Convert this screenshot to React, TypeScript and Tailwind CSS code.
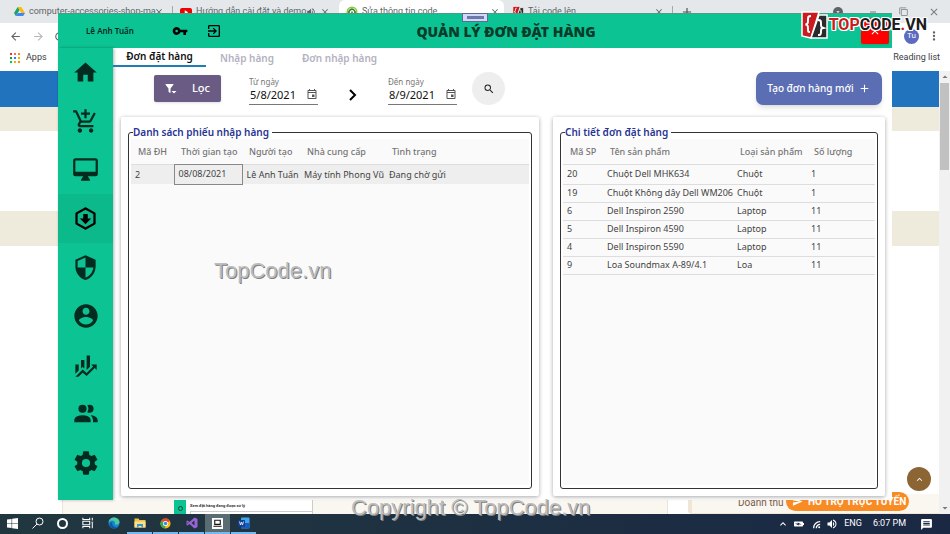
import type { ReactNode } from "react";
import {
  MdAdd, MdAddShoppingCart, MdArrowBack, MdArrowForward, MdClose, MdExitToApp, MdHome, MdMoreVert,
  MdRefresh, MdSearch, MdSecurity, MdVpnKey, MdVolumeUp, MdOutlineEvent, MdKeyboardArrowUp,
  MdArrowDropUp, MdArrowDropDown, MdMinimize, MdFilterNone, MdRssFeed, MdBatteryChargingFull,
  MdMessage, MdSend,
} from "react-icons/md";

const Glyph = ({ d, className = "size-[27px]" }: { d: string; className?: string }) => (
  <svg viewBox="0 0 24 24" className={className} fill="currentColor"><path d={d} /></svg>
);

const hexArrow = "M21,16.5C21,16.88 20.79,17.21 20.47,17.38L12.57,21.82C12.41,21.94 12.21,22 12,22C11.79,22 11.59,21.94 11.43,21.82L3.53,17.38C3.21,17.21 3,16.88 3,16.5V7.5C3,7.12 3.21,6.79 3.53,6.62L11.43,2.18C11.59,2.06 11.79,2 12,2C12.21,2 12.41,2.06 12.57,2.18L20.47,6.62C20.79,6.79 21,7.12 21,7.5V16.5M12,4.15L5,8.09V15.91L12,19.85L19,15.91V8.09L12,4.15ZM10,8V12H7L12,17L17,12H14V8Z";
const finance = "M6,16.5L3,19.44V11H6M11,14.66L9.43,13.32L8,14.64V7H11M16,13L13,16V3H16M18.81,12.81L17,11H22V16L20.21,14.21L13,21.36L9.53,18.34L5.75,22H3L9.47,15.66L13,18.64";
const filterMenu = "M11 11L16.76 3.62A1 1 0 0 0 16.59 2.22A1 1 0 0 0 16 2H2A1 1 0 0 0 1.38 2.22A1 1 0 0 0 1.21 3.62L7 11V16.87A1 1 0 0 0 7.29 17.7L9.29 19.7A1 1 0 0 0 10.7 19.7A1 1 0 0 0 11 18.87V11M13 16L18 21L23 16Z";
const desktop = "M21,14H3V4H21M21,2H3C1.89,2 1,2.89 1,4V16A2,2 0 0,0 3,18H10L8,21V22H16V21L14,18H21A2,2 0 0,0 23,16V4C23,2.89 22.1,2 21,2Z";
const account = "M12 2C6.48 2 2 6.48 2 12s4.48 10 10 10 10-4.48 10-10S17.52 2 12 2zm0 3c1.66 0 3 1.34 3 3s-1.34 3-3 3-3-1.34-3-3 1.34-3 3-3zm0 14.2c-2.5 0-4.71-1.28-6-3.22.03-1.99 4-3.08 6-3.08 1.99 0 5.97 1.09 6 3.08-1.29 1.94-3.5 3.22-6 3.22z";
const people = "M16 17V19H2V17S2 13 9 13 16 17 16 17M12.5 7.5A3.5 3.5 0 1 0 9 11A3.5 3.5 0 0 0 12.5 7.5M15.94 13A5.32 5.32 0 0 1 18 17V19H22V17S22 13.37 15.94 13M15 4A3.39 3.39 0 0 0 13.07 4.59A5 5 0 0 1 13.07 10.41A3.39 3.39 0 0 0 15 11A3.5 3.5 0 0 0 15 4Z";
const cog = "M12,15.5A3.5,3.5 0 0,1 8.5,12A3.5,3.5 0 0,1 12,8.5A3.5,3.5 0 0,1 15.5,12A3.5,3.5 0 0,1 12,15.5M19.43,12.97C19.47,12.65 19.5,12.33 19.5,12C19.5,11.67 19.47,11.34 19.43,11L21.54,9.37C21.73,9.22 21.78,8.95 21.66,8.73L19.66,5.27C19.54,5.05 19.27,4.96 19.05,5.05L16.56,6.05C16.04,5.66 15.5,5.32 14.87,5.07L14.5,2.42C14.46,2.18 14.25,2 14,2H10C9.75,2 9.54,2.18 9.5,2.42L9.13,5.07C8.5,5.32 7.96,5.66 7.44,6.05L4.95,5.05C4.73,4.96 4.46,5.05 4.34,5.27L2.34,8.73C2.21,8.95 2.27,9.22 2.46,9.37L4.57,11C4.53,11.34 4.5,11.67 4.5,12C4.5,12.33 4.53,12.65 4.57,12.97L2.46,14.63C2.27,14.78 2.21,15.05 2.34,15.27L4.34,18.73C4.46,18.95 4.73,19.03 4.95,18.95L7.44,17.94C7.96,18.34 8.5,18.68 9.13,18.93L9.5,21.58C9.54,21.82 9.75,22 10,22H14C14.25,22 14.46,21.82 14.5,21.58L14.87,18.93C15.5,18.67 16.04,18.34 16.56,17.94L19.05,18.95C19.27,19.03 19.54,18.95 19.66,18.73L21.66,15.27C21.78,15.05 21.73,14.78 21.54,14.63L19.43,12.97Z";

const Drive = () => (
  <svg viewBox="0 0 24 24" className="size-[11px] shrink-0">
    <path d="M8 2h8l8 13h-8z" fill="#fbbc04" />
    <path d="M8 2l4 7L4 22l-4-7z" fill="#1ea362" />
    <path d="M8 15h16l-4 7H4z" fill="#4285f4" />
  </svg>
);

const YouTube = () => (
  <svg viewBox="0 0 24 24" className="size-3 shrink-0">
    <rect y="4" width="24" height="17" rx="4" fill="#f00000" />
    <path d="M9.500 8.500v8l7-4z" fill="#fff" />
  </svg>
);

const Swirl = () => (
  <svg viewBox="0 0 24 24" className="size-3 shrink-0" fill="none" strokeWidth="3">
    <circle cx="12" cy="12" r="9.500" stroke="#8dc63f" />
    <path d="M7 16a6 6 0 1 1 9 1M12 11v8" stroke="#3c7d22" />
  </svg>
);

const BraceLogo = ({ className }: { className: string }) => (
  <svg viewBox="0 0 28 28" className={className}>
    <path d="M2 1h17L11 27l-9-2z" fill="#c91b20" stroke="#fff" strokeWidth="1.500" />
    <path d="M19 4h8v23H11z" fill="#2b2b2b" stroke="#fff" strokeWidth="1.500" />
    <path d="M11 5c-3 0-3 1-3 4s0 4-2.500 4.500C8 14 8 15 8 18s0 3 2 3M18 9c3 0 3 1 3 4s0 3 2.500 4C21 17.500 21 18 21 21s-1 3-3 3" fill="none" stroke="#fff" strokeWidth="2" />
  </svg>
);

type TabProps = { icon: ReactNode; title: string; sound?: boolean; className: string };
const BrowserTab = ({ icon, title, sound, className }: TabProps) => (
  <div className={`flex h-full items-center gap-1 pr-1 text-[9px] text-[#5f6368] ${className}`}>
    {icon}
    <span className="min-w-0 flex-1 whitespace-nowrap">{title}</span>
    {sound && <MdVolumeUp className="size-[10px] shrink-0" />}
    <button aria-label="Close tab" className="shrink-0"><MdClose className="size-[10px]" /></button>
  </div>
);

const appDots = ["bg-red-500", "bg-red-400", "bg-orange-400", "bg-green-600", "bg-blue-500", "bg-yellow-500", "bg-green-500", "bg-yellow-500", "bg-orange-400"];

const Browser = () => (
  <div className="flex min-h-0 flex-1 flex-col bg-white font-['Roboto',sans-serif]">
    <div className="flex h-[23px] items-center bg-[#e4e8eb]">
      <BrowserTab icon={<Drive />} title="computer-accessories-shop-ma" className="ml-[14px] w-[154px]" />
      <i className="mx-1 h-3 w-px bg-[#a5a9ad]" />
      <BrowserTab icon={<YouTube />} title="Hướng dẫn cài đặt và demo" sound className="ml-[3px] w-[154px]" />
      <BrowserTab icon={<Swirl />} title="Sửa thông tin code" className="ml-[5px] w-[165px] rounded-t-md bg-white pl-[7px]" />
      <BrowserTab icon={<BraceLogo className="size-3 shrink-0" />} title="Tải code lên" className="ml-[8px] w-[156px]" />
      <i className="mx-1 h-3 w-px bg-[#a5a9ad]" />
      <button aria-label="New tab" className="ml-[3px]"><MdAdd className="size-[14px] text-[#4b4f54]" /></button>
      <div className="ml-auto flex items-center text-[#777b80]">
        <span className="mr-[24px] flex size-[10px] items-center justify-center rounded-full bg-[#5f6368] text-white"><MdArrowDropDown className="size-2" /></span>
        <button aria-label="Minimize" className="mr-5 -mt-2"><MdMinimize className="size-3" /></button>
        <button aria-label="Restore" className="mr-5"><MdFilterNone className="size-[9px] -scale-x-100 rotate-180" /></button>
        <button aria-label="Close" className="mr-[10px]"><MdClose className="size-3" /></button>
      </div>
    </div>
    <div className="flex h-[25px] items-center px-[9px] pt-px text-[#5f6368]">
      <button aria-label="Back"><MdArrowBack className="size-[13px]" /></button>
      <button aria-label="Forward" className="ml-[10px] text-[#b5b8bc]"><MdArrowForward className="size-[13px]" /></button>
      <button aria-label="Reload" className="ml-2"><MdRefresh className="size-[13px]" /></button>
      <span className="ml-auto flex size-[15px] items-center justify-center rounded-full bg-[#5c6bc0] text-[8px] leading-none text-white">Tu</span>
      <button aria-label="Menu" className="ml-2"><MdMoreVert className="size-[14px]" /></button>
    </div>
    <div className="flex h-[23px] items-center px-[10px] pb-[3px] text-[9px] text-[#3c4043]">
      <span className="grid grid-cols-3 gap-[2px]">
        {appDots.map((c, i) => <i key={i} className={`size-[2px] ${c}`} />)}
      </span>
      <span className="ml-[6px]">Apps</span>
      <span className="ml-auto">Reading list</span>
    </div>
    <div className="flex min-h-0 flex-1">
      <div className="relative flex flex-1 flex-col">
        <div className="h-[36px] bg-[#2173bd]" />
        <div className="h-6 bg-[#eeeadc]" />
        <div className="h-20" />
        <div className="h-[35px] bg-[#eeeadc]" />
        <div className="flex-1" />
        <div className="flex h-5 pl-[62px]">
          <div className="flex w-[606px] border-x border-[#e8e4dc] bg-[#faf7f1] pl-[111px]">
            <div className="flex w-[139px] border-r border-[#ccc] bg-white">
              <div className="flex w-3 items-end justify-center bg-[#0cc493] pb-[3px]"><i className="size-[5px] rounded-full border border-[#08422f]" /></div>
              <div className="flex flex-1 flex-col justify-end pl-1">
                <p className="text-[4px] leading-[6px] font-bold text-[#333]">Xem đặt hàng đang được xử lý</p>
                <div className="mt-[2px] h-[3px] border-t border-l border-[#ccc]" />
              </div>
            </div>
          </div>
          <div className="ml-5 flex-1 rounded-bl border-b border-l-4 border-[#efe6d6] bg-[#faf7f1] pt-[3px] pl-[46px] text-[10px] leading-3 whitespace-nowrap text-[#7a5c48]">Doanh thu</div>
        </div>
        <a href="#support" className="absolute right-[30px] bottom-[3px] flex h-[19px] w-[123px] items-center gap-[5px] rounded-full bg-[#f98b25] pl-[6px] text-[10px] font-bold whitespace-nowrap text-white">
          <MdSend className="size-[11px]" />HỖ TRỢ TRỰC TUYẾN
        </a>
        <button aria-label="Top" className="absolute right-2 bottom-[23px] flex size-6 items-center justify-center rounded-full bg-[#8c6534] text-white"><MdKeyboardArrowUp className="size-[11px]" /></button>
      </div>
      <div className="flex w-[11px] flex-col items-center bg-[#f1f1f1] text-[#777]">
        <MdArrowDropUp className="size-3 shrink-0" />
        <div className="h-[87px] w-[9px] bg-[#c1c1c1]" />
        <MdArrowDropDown className="mt-auto size-3 shrink-0" />
      </div>
    </div>
  </div>
);

const nav: { label: string; icon: ReactNode }[] = [
  { label: "Trang chủ", icon: <MdHome className="size-[27px]" /> },
  { label: "Bán hàng", icon: <MdAddShoppingCart className="size-[27px]" /> },
  { label: "Sản phẩm", icon: <Glyph d={desktop} /> },
  { label: "Đơn đặt hàng", icon: <Glyph d={hexArrow} /> },
  { label: "Bảo hành", icon: <MdSecurity className="size-[27px]" /> },
  { label: "Tài khoản", icon: <Glyph d={account} className="size-[28px]" /> },
  { label: "Thống kê", icon: <Glyph d={finance} /> },
  { label: "Khách hàng", icon: <Glyph d={people} className="size-[28px]" /> },
  { label: "Cài đặt", icon: <Glyph d={cog} className="size-[28px]" /> },
];

const DateField = ({ id, label, value }: { id: string; label: string; value: string }) => (
  <div className="w-[69px]">
    <label htmlFor={id} className="block text-[8px] leading-[10px] whitespace-nowrap text-[#777]">{label}</label>
    <div className="flex h-[18px] items-center border-b border-[#777]">
      <input id={id} type="text" defaultValue={value} className="w-full min-w-0 pl-px text-[11px] text-[#111] outline-none" />
      <button aria-label={`Lịch ${label}`} className="shrink-0 pb-[3px] text-[#555]"><MdOutlineEvent className="size-3" /></button>
    </div>
  </div>
);

type GridProps = { title: string; cols: { name: string; width: string }[]; rows: string[][]; selected?: boolean };
const DataCard = ({ title, cols, rows, selected }: GridProps) => (
  <section className="flex min-w-0 rounded-[2px] bg-white px-[7px] pt-2 pb-[7px] shadow-[0_1px_4px_rgba(0,0,0,0.35)]">
    <fieldset className="flex min-w-0 flex-1 flex-col rounded-[3px] border border-[#333] px-[2px] pb-[3px]">
      <legend className="ml-[2px] pr-[3px] text-[10px] leading-[14px] font-semibold text-[#283593]">{title}</legend>
      <div className="flex-1 bg-[#fafafa]">
        <table className="w-full table-fixed border-collapse text-left text-[9px] whitespace-nowrap">
          <thead>
            <tr className="h-[25px] border-b border-[#ddd] text-[#757575]">
              {cols.map((c) => <th key={c.name} scope="col" className={`p-0 pl-[7px] font-medium ${c.width}`}>{c.name}</th>)}
            </tr>
          </thead>
          <tbody>
            {rows.map((r) => (
              <tr key={r[0]} className={selected ? "h-5 bg-[#eee] text-[#444]" : "h-[18px] border-b border-[#ddd] text-[#444] first:h-5"}>
                {r.map((v, i) => (
                  <td key={i} className={selected && i === 1 ? "border border-[#888] p-0 pl-1" : "p-0 pl-1"}>{v}</td>
                ))}
              </tr>
            ))}
          </tbody>
        </table>
      </div>
    </fieldset>
  </section>
);

const orderCols = [
  { name: "Mã ĐH", width: "w-[43px]" },
  { name: "Thời gian tạo", width: "w-[68px]" },
  { name: "Người tạo", width: "w-[58px]" },
  { name: "Nhà cung cấp", width: "w-[85px]" },
  { name: "Tình trạng", width: "" },
];
const detailCols = [
  { name: "Mã SP", width: "w-[40px]" },
  { name: "Tên sản phẩm", width: "w-[130px]" },
  { name: "Loại sản phẩm", width: "w-[74px]" },
  { name: "Số lượng", width: "" },
];
const orders = [["2", "08/08/2021", "Lê Anh Tuấn", "Máy tính Phong Vũ", "Đang chờ gửi"]];
const details = [
  ["20", "Chuột Dell MHK634", "Chuột", "1"],
  ["19", "Chuột Không dây Dell WM206", "Chuột", "1"],
  ["6", "Dell Inspiron 2590", "Laptop", "11"],
  ["5", "Dell Inspiron 4590", "Laptop", "11"],
  ["4", "Dell Inspiron 5590", "Laptop", "11"],
  ["9", "Loa Soundmax A-89/4.1", "Loa", "11"],
];

const ShopWindow = () => (
  <div className="absolute inset-x-[58px] top-[13px] bottom-[34px] flex flex-col border-t border-[#4c9c86] bg-white">
    <header className="flex h-[34px] shrink-0 items-center bg-[#0cc493] text-[#032b20]">
      <span className="ml-[28px] w-[86px] text-[8px] font-semibold">Lê Anh Tuấn</span>
      <button aria-label="Đổi mật khẩu" className="text-black"><MdVpnKey className="size-4" /></button>
      <button aria-label="Đăng xuất" className="ml-[18px] text-black"><MdExitToApp className="size-4" /></button>
      <h1 className="flex-1 pl-[22px] text-center text-[14px] font-black whitespace-nowrap text-[#073b2a]">QUẢN LÝ ĐƠN ĐẶT HÀNG</h1>
      <button aria-label="Đóng" className="mr-[3px] ml-[93px] flex h-[26px] w-[28px] items-center justify-center rounded-[2px] bg-[#fe0000] text-white shadow-sm"><MdClose className="size-3" /></button>
    </header>
    <div className="flex min-h-0 flex-1">
      <nav className="flex w-[55px] shrink-0 flex-col bg-[#0cc493] pb-[13px] text-[#032b20] shadow-[1px_0_3px_rgba(0,0,0,0.3)]">
        {nav.map((n, i) => (
          <button key={n.label} aria-label={n.label} className={i === 3 ? "flex flex-1 items-center justify-center bg-[#0bb98a] text-black" : "flex flex-1 items-center justify-center"}>{n.icon}</button>
        ))}
      </nav>
      <main className="flex min-w-0 flex-1 flex-col">
        <div className="flex h-[19px] shrink-0 text-[10px] font-semibold text-[#b3b1c1]">
          <button className="w-[93px] border-b-2 border-[#1f7cb4] text-[#111]">Đơn đặt hàng</button>
          <button className="ml-[14px] pt-px">Nhập hàng</button>
          <button className="ml-[28px] pt-px">Đơn nhập hàng</button>
        </div>
        <div className="mt-[5px] mb-3 flex h-[33px] shrink-0 items-end pr-[10px] pl-[41px]">
          <button className="mr-[28px] flex h-[27px] w-[67px] items-center justify-between self-center rounded-[2px] bg-[#6a5b84] px-[11px] text-[11px] font-medium text-white shadow"><Glyph d={filterMenu} className="size-3" />Lọc</button>
          <DateField id="from" label="Từ ngày" value="5/8/2021" />
          <span className="flex w-[70px] justify-center pb-1 text-black">
            <svg viewBox="0 0 12 12" className="size-3" fill="none" stroke="currentColor" strokeWidth="2"><path d="M3 1l5 5-5 5" /></svg>
          </span>
          <DateField id="to" label="Đến ngày" value="8/9/2021" />
          <button aria-label="Tìm" className="ml-[15px] flex size-[33px] items-center justify-center rounded-full bg-[#eee] text-[#222]"><MdSearch className="size-3" /></button>
          <button className="ml-auto flex h-[33px] w-[126px] items-center justify-center gap-1 rounded-[7px] bg-[#5b6db3] text-[10px] font-medium text-white shadow-md">Tạo đơn hàng mới<MdAdd className="size-[13px]" /></button>
        </div>
        <div className="grid min-h-0 flex-1 grid-cols-[418fr_332fr] gap-[14px] pr-[7px] pb-1 pl-2">
          <DataCard title="Danh sách phiếu nhập hàng" cols={orderCols} rows={orders} selected />
          <DataCard title="Chi tiết đơn đặt hàng" cols={detailCols} rows={details} />
        </div>
      </main>
    </div>
  </div>
);

const WindowsLogo = () => (
  <svg viewBox="0 0 12 12" className="size-[11px]" fill="#fff"><path d="M0 1.700L5 1v4.700H0zM5.600 .900L12 0v5.700H5.600zM0 6.300h5V11L0 10.300zM5.600 6.300H12V12l-6.400-.900z" /></svg>
);
const SearchGlass = () => (
  <svg viewBox="0 0 12 12" className="size-3" fill="none" stroke="#fff" strokeWidth="1"><circle cx="7.500" cy="4.500" r="3.500" /><path d="M5 7L.500 11.500" /></svg>
);
const TaskView = () => (
  <svg viewBox="0 0 14 14" className="size-3" fill="none" stroke="#fff" strokeWidth="1.200"><path d="M1 1v2h8V1M1 13v-2h8v2M1 5h8v4H1zM12 1v3M12 7v6M11 6h2" /></svg>
);
const Edge = () => (
  <svg viewBox="0 0 24 24" className="size-3"><circle cx="12" cy="12" r="11" fill="#1787d4" /><path d="M1 11C2 4 7 1 12 1c7 0 11 5 11 9 0 4-3 5-6 5s-4-1-3-3c1-3-3-5-6-5-3 0-6 2-7 4z" fill="#4fc8a0" /><path d="M9 10c-2 5 1 11 9 10-7 6-15 1-15-5 0-3 3-5 6-5z" fill="#0c59a4" /></svg>
);
const Folder = () => (
  <svg viewBox="0 0 24 24" className="size-3"><path d="M1 3h8l2 3h12v15H1z" fill="#f5c342" /><path d="M1 9h22v12H1z" fill="#fde08a" /><path d="M6 14h12v7h-3v-3H9v3H6z" fill="#3a93dd" /></svg>
);
const Chrome = () => (
  <svg viewBox="0 0 24 24" className="size-[11px]"><circle cx="12" cy="12" r="11" fill="#fbbc04" /><path d="M12 12L2.500 6.500A11 11 0 0 1 21.500 6.500z" fill="#ea4335" /><path d="M12 12L2.500 6.500A11 11 0 0 0 11 23z" fill="#34a853" /><circle cx="12" cy="12" r="5.500" fill="#fff" /><circle cx="12" cy="12" r="4" fill="#4285f4" /></svg>
);
const VisualStudio = () => (
  <svg viewBox="0 0 24 24" className="size-3"><path d="M17 1l6 3v16l-6 3L7 14l-4 3-2-1V8l2-1 4 3zM17 7l-6 5 6 5zM3 10v4l2-2z" fill="#9a63d8" fillRule="evenodd" /></svg>
);
const Laptop = () => (
  <svg viewBox="0 0 12 12" className="size-[11px]"><rect width="12" height="12" fill="#fff" /><path d="M3 2.500h6v4.500H3zM1.500 9h9" fill="none" stroke="#111" strokeWidth="1.200" /></svg>
);
const Word = () => (
  <svg viewBox="0 0 24 24" className="size-3"><rect x="6" y="1" width="17" height="22" rx="2" fill="#41a5ee" /><path d="M6 12h17v9a2 2 0 0 1-2 2H6z" fill="#185abd" /><rect y="6" width="14" height="13" rx="1" fill="#103f91" /><path d="M3 9l2 7 2-6 2 6 2-7" fill="none" stroke="#fff" strokeWidth="1.500" /></svg>
);

const running = "mr-px border-[#76b9ed]";
const tasks: { label: string; icon: ReactNode; style: string }[] = [
  { label: "Start", icon: <WindowsLogo />, style: "border-transparent" },
  { label: "Search", icon: <SearchGlass />, style: "border-transparent" },
  { label: "Cortana", icon: <i className="size-[11px] rounded-full border-2 border-white" />, style: "border-transparent" },
  { label: "Task view", icon: <TaskView />, style: "mr-px border-transparent" },
  { label: "Edge", icon: <Edge />, style: "mr-px border-transparent" },
  { label: "Explorer", icon: <Folder />, style: running },
  { label: "Chrome", icon: <Chrome />, style: running },
  { label: "Visual Studio", icon: <VisualStudio />, style: running },
  { label: "Shop", icon: <Laptop />, style: "mr-px border-[#76b9ed] bg-[#5a6c73]" },
  { label: "Word", icon: <Word />, style: running },
];

const Taskbar = () => (
  <footer className="relative flex h-5 shrink-0 items-center bg-linear-to-r from-[#21373f] to-[#1a2844] font-['Roboto',sans-serif] text-[9px] text-white">
    {tasks.map((t) => (
      <button key={t.label} aria-label={t.label} className={`flex h-full w-[25px] items-center justify-center border-b-2 ${t.style}`}>{t.icon}</button>
    ))}
    <div className="ml-auto flex items-center pr-[17px]">
      <MdKeyboardArrowUp className="size-3" />
      <MdBatteryChargingFull className="ml-1 size-3 rotate-90" />
      <MdRssFeed className="ml-[6px] size-[11px] -scale-x-100" />
      <MdVolumeUp className="ml-1 size-3" />
      <span className="ml-[6px]">ENG</span>
      <span className="ml-[11px]">6:07 PM</span>
      <MdMessage className="ml-[14px] size-[13px]" />
    </div>
  </footer>
);

const watermark = "pointer-events-none absolute font-['Liberation_Sans',sans-serif] text-[22px] leading-6 whitespace-nowrap text-[#bdbdbd] [text-shadow:1px_1px_0_#808080]";

export default function App() {
  return (
    <div className="relative flex h-screen flex-col overflow-hidden font-['Noto_Sans',sans-serif]">
      <Browser />
      <ShopWindow />
      <div className="absolute top-[13px] left-[462px] flex h-[9px] w-[26px] items-center justify-center border border-[#5b6a9a] bg-[#cfd8f5]"><i className="h-[3px] w-[17px] bg-[#6b78a8]" /></div>
      <div className="absolute top-[11px] right-[23px] flex items-center gap-px">
        <BraceLogo className="size-[28px]" />
        <span className="font-['Roboto',sans-serif] text-[16px] leading-none font-bold text-[#1c1c1c] [text-shadow:1px_0_#fff,-1px_0_#fff,0_1px_#fff,0_-1px_#fff,1px_1px_#fff,-1px_-1px_#fff,1px_-1px_#fff,-1px_1px_#fff]">
          <span className="text-[#c91b20]">TOP</span>CODE<span className="text-[#c91b20]">.</span>VN
        </span>
      </div>
      <Taskbar />
      <span className={`${watermark} top-[259px] left-[214px]`}>TopCode.vn</span>
      <span className={`${watermark} top-[496px] left-[351px]`}>Copyright © TopCode.vn</span>
    </div>
  );
}
